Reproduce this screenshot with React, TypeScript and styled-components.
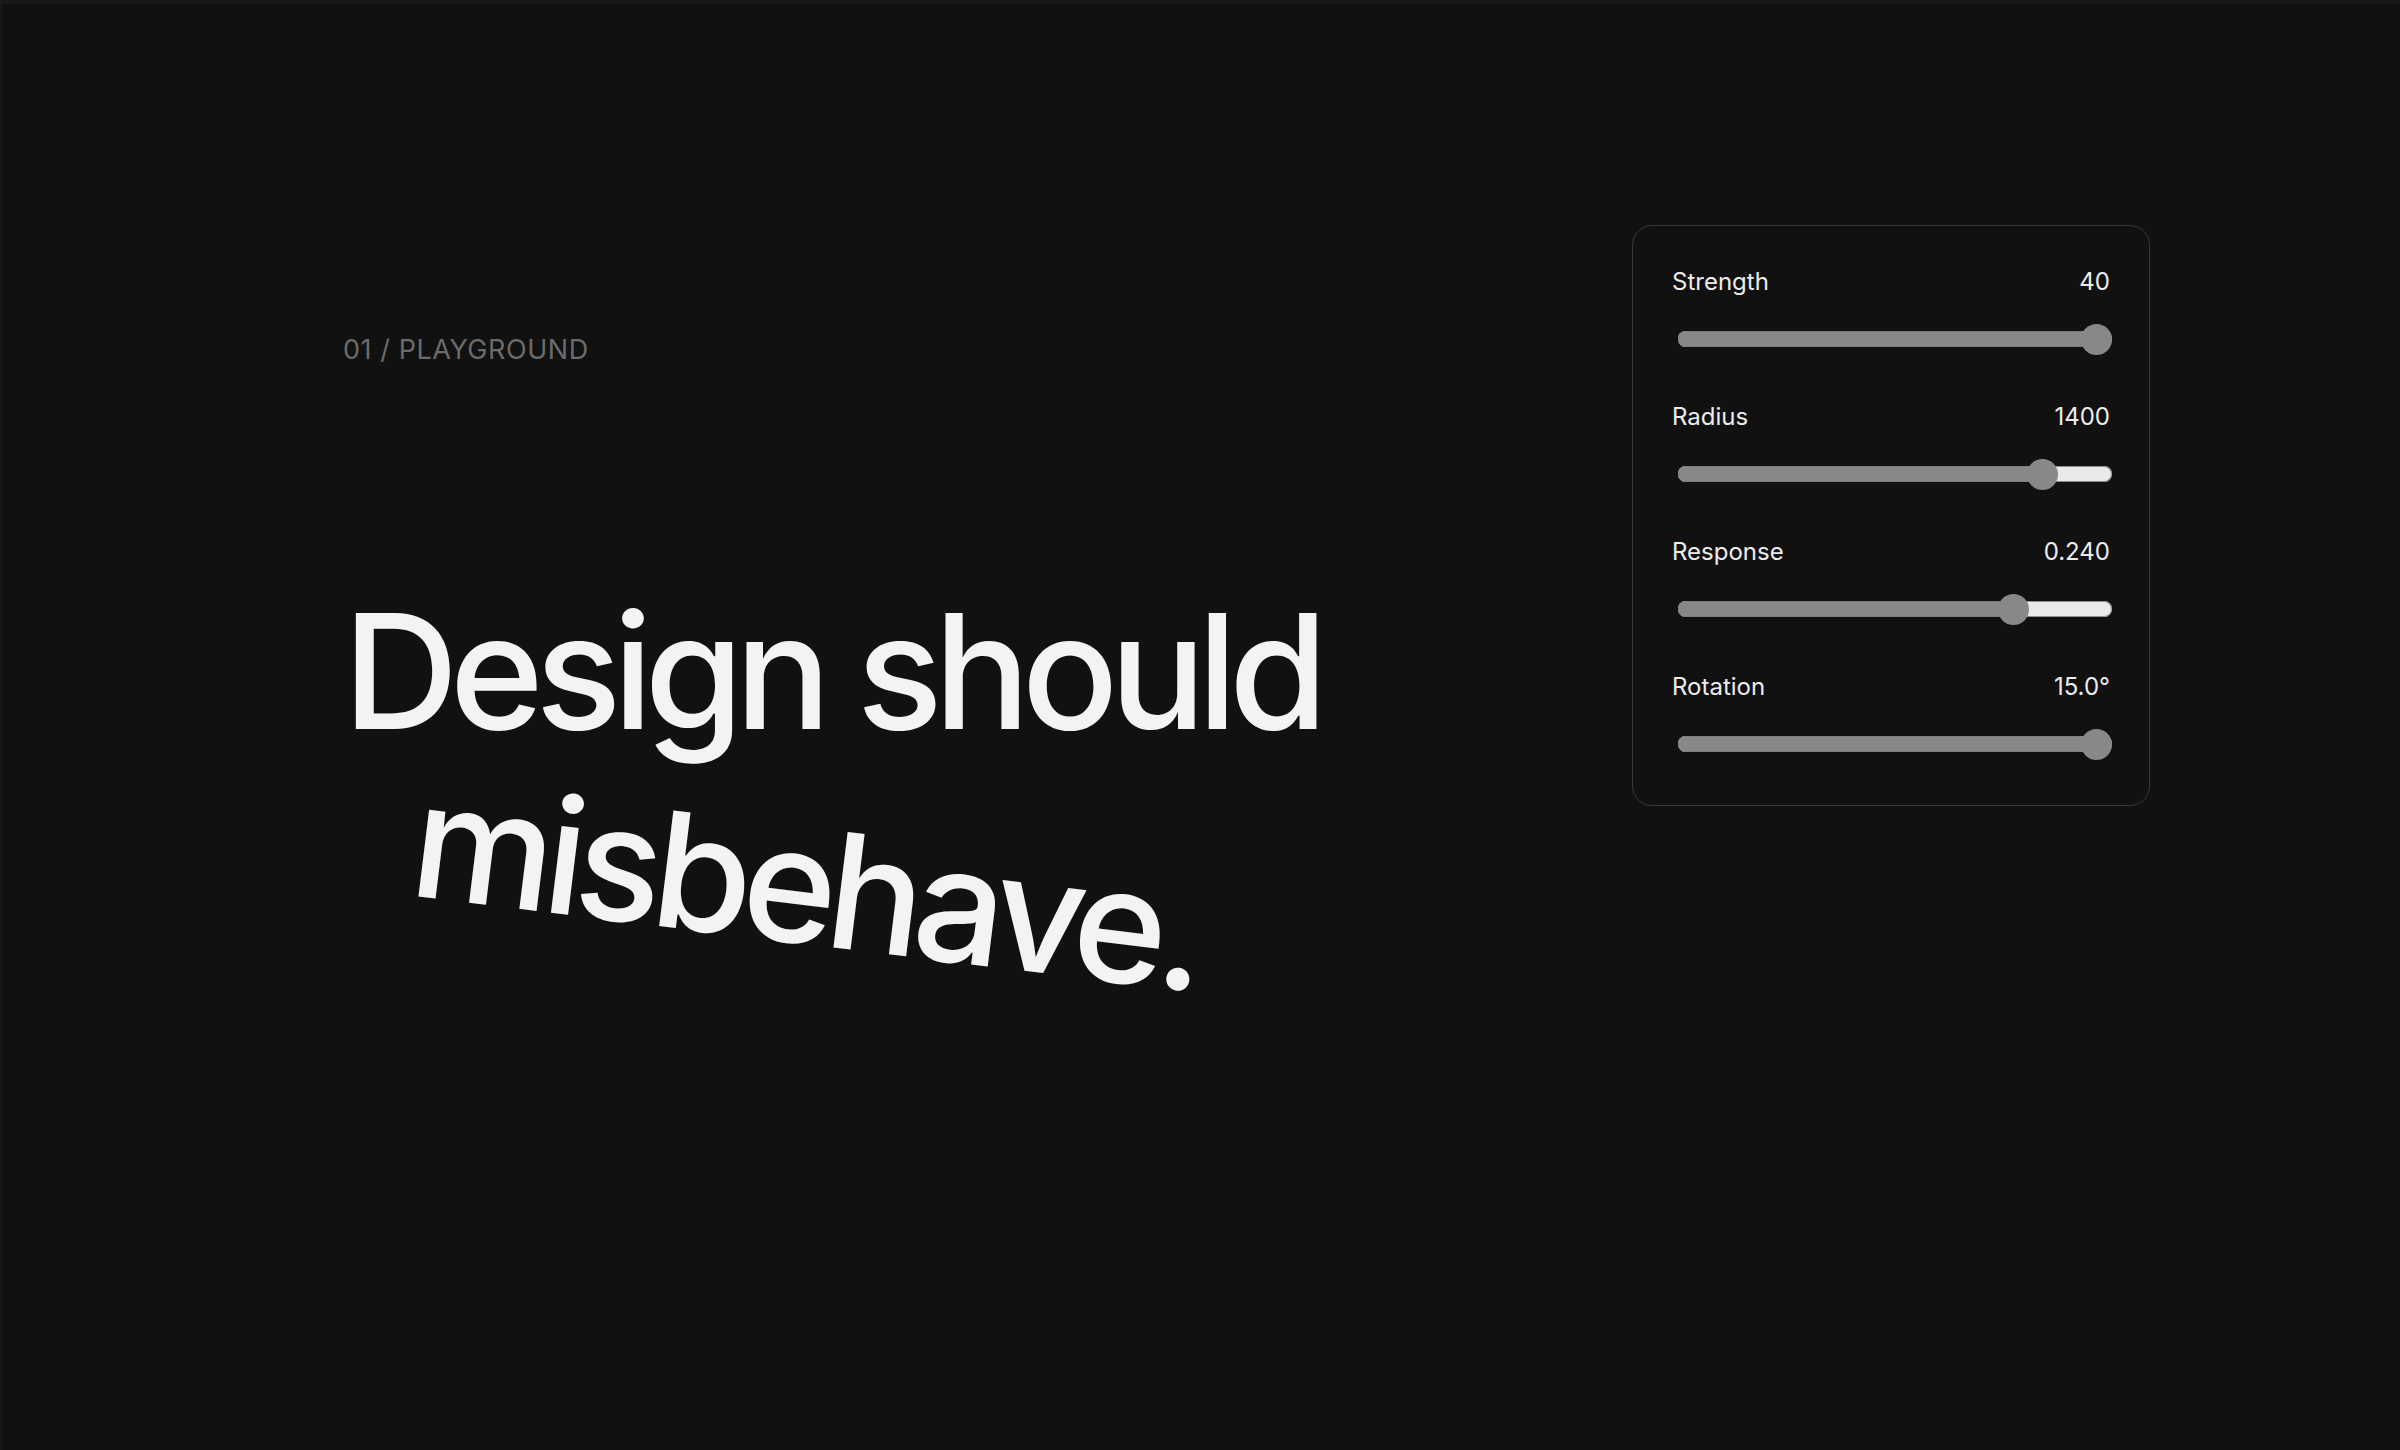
import React, { useState } from 'react';
import styled, { createGlobalStyle } from 'styled-components';

const GlobalStyle = createGlobalStyle`
  html, body {
    margin: 0;
    padding: 0;
    background: #111111;
  }
  body {
    font-family: Inter, "Noto Sans", sans-serif;
    -webkit-font-smoothing: antialiased;
  }
  * {
    box-sizing: border-box;
  }
`;

type Control = {
  label: string;
  min: number;
  max: number;
  value: number;
  format: (v: number) => string;
};

const initialControls: Control[] = [
  { label: 'Strength', min: 0, max: 40, value: 40, format: (v) => v.toFixed(0) },
  { label: 'Radius', min: 100, max: 1600, value: 1400, format: (v) => v.toFixed(0) },
  { label: 'Response', min: 0.01, max: 0.3, value: 0.24, format: (v) => v.toFixed(3) },
  { label: 'Rotation', min: 0, max: 15, value: 15, format: (v) => `${v.toFixed(1)}°` },
];

const THUMB = 31;

const Slider = ({ control, onChange }: { control: Control; onChange: (v: number) => void }) => {
  const pct = (control.value - control.min) / (control.max - control.min);

  const handlePointer = (e: React.PointerEvent<HTMLDivElement>) => {
    if (e.type === 'pointermove' && e.buttons !== 1) return;
    const rect = e.currentTarget.getBoundingClientRect();
    const p = Math.min(1, Math.max(0, (e.clientX - rect.left - THUMB / 2) / (rect.width - THUMB)));
    onChange(control.min + p * (control.max - control.min));
  };

  return (
    <SliderArea onPointerDown={handlePointer} onPointerMove={handlePointer}>
      <Track>
        <Fill style={{ width: `calc(${pct} * (100% - ${THUMB}px) + ${THUMB / 2}px)` }} />
      </Track>
      <Thumb style={{ left: `calc(${pct} * (100% - ${THUMB}px))` }} />
    </SliderArea>
  );
};

const App = () => {
  const [controls, setControls] = useState(initialControls);

  const update = (index: number, value: number) => {
    setControls((prev) => prev.map((c, i) => (i === index ? { ...c, value } : c)));
  };

  return (
    <Page>
      <GlobalStyle />
      <Intro>
        <Eyebrow>01 / PLAYGROUND</Eyebrow>
        <Title>
          Design should
          <br />
          <Tilted>misbehave.</Tilted>
        </Title>
      </Intro>
      <Panel>
        {controls.map((c, i) => (
          <Row key={c.label}>
            <LabelRow>
              <span>{c.label}</span>
              <span>{c.format(c.value)}</span>
            </LabelRow>
            <Slider control={c} onChange={(v) => update(i, v)} />
          </Row>
        ))}
      </Panel>
    </Page>
  );
};

export default App;

const Page = styled.div`
  min-height: 100vh;
  display: flex;
  justify-content: space-between;
  align-items: flex-start;
  padding: 225px 250px 0 343px;
  background: #111111;
  box-shadow: inset 2px 4px 0 #191919;
  overflow: hidden;
`;

const Intro = styled.div`
  padding-top: 109px;
`;

const Eyebrow = styled.div`
  font-size: 27px;
  line-height: 32px;
  letter-spacing: 0.02em;
  color: #6b6b6b;
`;

const Title = styled.h1`
  margin: 225px 0 0;
  font-size: 160px;
  line-height: 160px;
  font-weight: 500;
  letter-spacing: -0.054em;
  color: #f3f3f3;
  white-space: nowrap;
`;

const Tilted = styled.span`
  display: inline-block;
  transform-origin: 0 86%;
  transform: translate(64px, 6px) rotate(7deg);
`;

const Panel = styled.div`
  width: 518px;
  display: flex;
  flex-direction: column;
  gap: 42px;
  padding: 41px 39px 40px;
  border: 1px solid #383838;
  border-radius: 20px;
  background: #111111;
`;

const Row = styled.div`
  display: flex;
  flex-direction: column;
  gap: 22px;
`;

const LabelRow = styled.div`
  display: flex;
  justify-content: space-between;
  font-size: 24px;
  line-height: 29px;
  color: #ececec;
`;

const SliderArea = styled.div`
  position: relative;
  height: 42px;
  margin: 0 -2px 0 6px;
  display: flex;
  align-items: center;
  cursor: pointer;
  touch-action: none;
`;

const Track = styled.div`
  position: relative;
  width: 100%;
  height: 16px;
  border-radius: 8px;
  background: #e9e9e9;
  box-shadow: inset 0 0 0 1px #8f8f8f;
  overflow: hidden;
`;

const Fill = styled.div`
  position: absolute;
  left: 0;
  top: 0;
  bottom: 0;
  background: #888888;
  box-shadow: inset 1px 0 0 #7a7a7a, inset 0 1px 0 #7e7e7e, inset 0 -1px 0 #7e7e7e;
`;

const Thumb = styled.div`
  position: absolute;
  top: 50%;
  width: ${THUMB}px;
  height: ${THUMB}px;
  margin-top: -${THUMB / 2}px;
  border-radius: 50%;
  background: #888888;
`;
